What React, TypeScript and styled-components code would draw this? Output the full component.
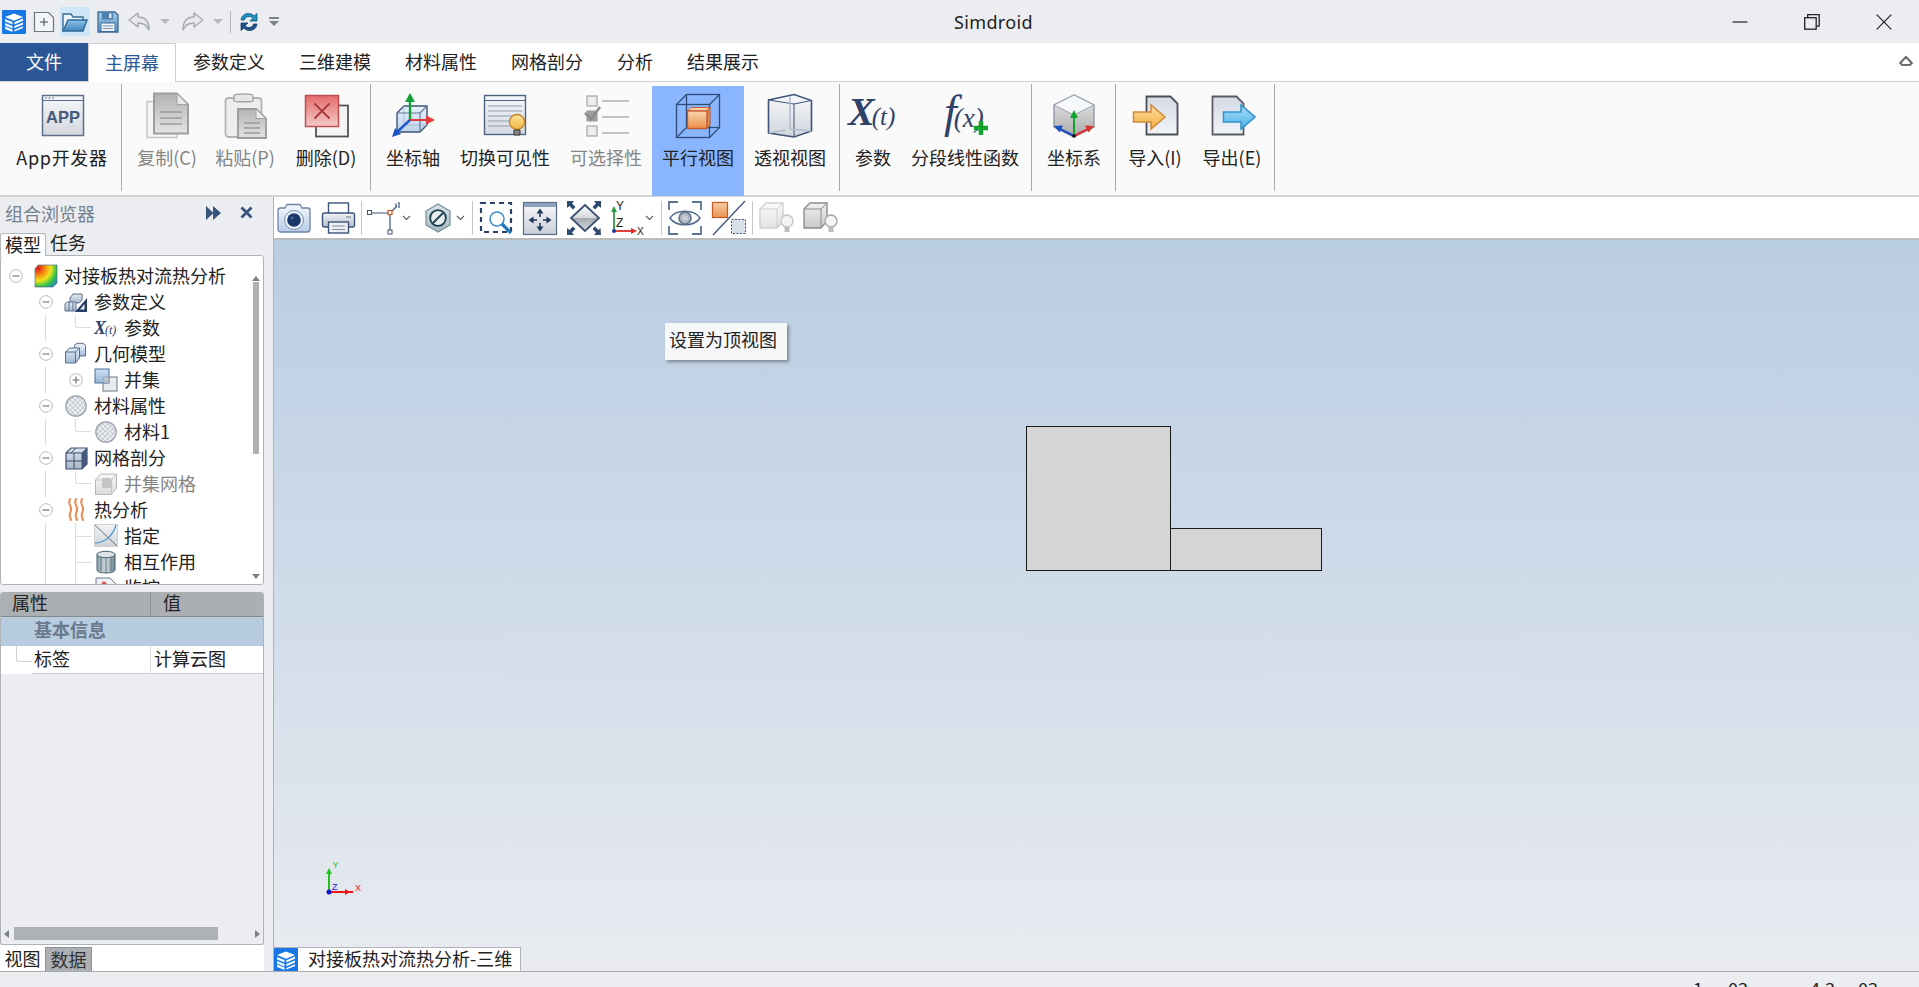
import React from "react";
import styled, { createGlobalStyle } from "styled-components";

const FONT = `"Noto Sans CJK SC", "Noto Sans", "Liberation Sans", sans-serif`;

const Global = createGlobalStyle`
  html, body { margin: 0; padding: 0; background: #ebedf0; overflow: hidden; }
  * { box-sizing: border-box; }
  svg { display: block; flex: none; }
`;

const Page = styled.div`
  width: 1919px; height: 987px; display: flex; flex-direction: column; overflow: hidden;
  font-family: ${FONT}; font-size: 18px; color: #222; background: #ebedf0;
`;

/* ---------- title bar ---------- */
const TitleBar = styled.header`
  height: 43px; flex: none; display: grid; grid-template-columns: 954px auto 1fr; align-items: center; background: #ebedf0;
`;
const Qat = styled.div`display: flex; align-items: center; height: 100%;`;
const QatItem = styled.div<{ $ml: number; $w: number; $on?: boolean }>`
  margin-left: ${(p) => p.$ml}px; width: ${(p) => p.$w}px; height: 29px; display: flex; align-items: center; justify-content: center;
  background: ${(p) => (p.$on ? "#cfe5f8" : "transparent")};
`;
const QatSep = styled.div`margin-left: 7px; width: 1px; height: 22px; background: #b4b8bc;`;
const Title = styled.div`font-family: "Noto Sans", sans-serif; font-size: 18px; color: #222; letter-spacing: 0.35px; line-height: 24px;`;
const WinControls = styled.div`display: flex; justify-content: flex-end; padding-right: 27px; gap: 56px;`;

/* ---------- tabs ---------- */
const TabBar = styled.nav`
  height: 39px; flex: none; display: flex; background: #fff; border-bottom: 1px solid #cfcfcf; position: relative;
`;
const FileTab = styled.div`
  width: 88px; height: 38px; background: #2b5797; color: #fff; display: flex; align-items: center; justify-content: center; padding-bottom: 2px;
`;
const RibbonTab = styled.div<{ $active?: boolean }>`
  padding: 0 ${(p) => (p.$active ? 16 : 17)}px 2px; height: ${(p) => (p.$active ? 39 : 38)}px; display: flex; align-items: center;
  color: ${(p) => (p.$active ? "#2b5797" : "#222")}; background: #fff;
  border: ${(p) => (p.$active ? "1px solid #cfcfcf" : "none")}; border-bottom: none;
  position: relative; z-index: 1;
`;
const Collapse = styled.div`margin-left: auto; padding: 12px 6px 0 0;`;

/* ---------- ribbon ---------- */
const Ribbon = styled.section`
  height: 115px; flex: none; display: flex; background: #fafafa; border-bottom: 2px solid #d4d4d4; padding-top: 4px;
`;
const RibbonGroup = styled.div<{ $pl?: number; $pr?: number }>`
  display: flex; padding-left: ${(p) => p.$pl ?? 0}px; padding-right: ${(p) => p.$pr ?? 0}px; position: relative;
  &::after { content: ""; position: absolute; right: 0; top: -2px; bottom: 4px; width: 1px; background: #a9a9a9; }
`;
const RibbonButton = styled.div<{ $w: number; $on?: boolean; $off?: boolean }>`
  width: ${(p) => p.$w}px; height: 110px; display: flex; flex-direction: column; align-items: center; padding-top: 6px;
  background: ${(p) => (p.$on ? "#8ab6ff" : "transparent")};
  color: ${(p) => (p.$off ? "#858585" : "#222")}; white-space: nowrap;
`;
const RibbonLabel = styled.div<{ $wide?: boolean }>`margin-top: 5px; line-height: 24px; height: 24px; letter-spacing: ${(p) => (p.$wide ? "0.7px" : "0")};`;

/* ---------- main ---------- */
const Main = styled.main`flex: 1; min-height: 0; display: flex;`;
const LeftColumn = styled.aside`width: 273px; flex: none; display: flex; flex-direction: column; padding-right: 9px;`;
const PanelHead = styled.div`
  height: 35px; flex: none; display: flex; align-items: center; padding: 0 11px 4px 5px; color: #75828f;
`;
const PanelTitle = styled.div`flex: 1; line-height: 24px;`;
const PanelTools = styled.div`display: flex; align-items: center; gap: 19px;`;
const SideTabs = styled.div`height: 23px; flex: none; display: flex; align-items: flex-end;`;
const SideTab = styled.div<{ $active?: boolean }>`
  height: 23px; width: ${(p) => (p.$active ? 46 : 44)}px; line-height: 21px; text-align: center; position: relative; top: ${(p) => (p.$active ? 1 : 0)}px; z-index: 1;
  background: ${(p) => (p.$active ? "#fff" : "transparent")};
  border: ${(p) => (p.$active ? "1px solid #b4b8bc" : "none")}; border-bottom: none; border-radius: 3px 3px 0 0;
`;
const TreeBox = styled.div`
  height: 330px; flex: none; background: #fff; border: 1px solid #b0b3b6; border-radius: 3px; display: flex; overflow: hidden;
`;
const TreeList = styled.ul`flex: 1; list-style: none; margin: 0; padding: 7px 0 0; overflow: hidden; min-width: 0;`;
const Row = styled.li<{ $level: number; $trunk?: boolean; $muted?: boolean }>`
  height: 26px; display: flex; align-items: center; position: relative; white-space: nowrap;
  padding-left: ${(p) => 5 + p.$level * 30}px; color: ${(p) => (p.$muted ? "#858585" : "#222")};
  &::before { content: ${(p) => (p.$trunk ? '""' : "none")}; position: absolute; left: 44px; top: 0; bottom: 0; width: 1px; background: #dcdcdc; }
`;
const Connector = styled.span<{ $run?: boolean }>`
  position: absolute; left: 74px; top: 0; width: 16px; height: ${(p) => (p.$run ? 26 : 13)}px;
  border-left: 1px solid #dcdcdc;
  ${(p) => (p.$run ? "" : "border-bottom: 1px solid #dcdcdc; border-bottom-left-radius: 3px;")}
  &::after { content: ${(p) => (p.$run ? '""' : "none")}; position: absolute; left: 0; top: 13px; width: 16px; height: 1px; background: #dcdcdc; }
`;
const ExpanderSlot = styled.span`width: 20px; flex: none; display: flex; justify-content: center;`;
const IconSlot = styled.span`margin-left: 8px; width: 24px; height: 24px; flex: none; position: relative; z-index: 1;`;
const RowLabel = styled.span`margin: -3px 0 0 6px; line-height: 24px;`;
const VScroll = styled.div`width: 12px; flex: none; display: flex; flex-direction: column; align-items: center; padding: 20px 0 5px; margin-right: 1px;`;
const VThumb = styled.div`width: 6px; height: 172px; background: #aeb2b5; margin-top: 1px;`;
const ArrowUp = styled.div`width: 0; height: 0; border: 4px solid transparent; border-top: none; border-bottom: 5px solid #7d8084;`;
const ArrowDown = styled.div`width: 0; height: 0; margin-top: auto; border: 4px solid transparent; border-bottom: none; border-top: 5px solid #7d8084;`;

const PropBox = styled.div`
  margin-top: 7px; flex: 1; min-height: 0; border: 1px solid #b0b3b6; border-top: none; border-radius: 3px; display: flex; flex-direction: column; background: #ebedf0;
`;
const PropHead = styled.div`
  height: 25px; flex: none; display: grid; grid-template-columns: 150px 1fr; background: #abafb2; border-bottom: 1px solid #85898d; border-radius: 3px 3px 0 0; line-height: 21px;
`;
const PropHeadCell = styled.div<{ $first?: boolean }>`
  padding-left: ${(p) => (p.$first ? 11 : 12)}px; ${(p) => (p.$first ? "border-right: 1px solid #8c9094;" : "")}
`;
const PropGroup = styled.div`
  height: 29px; flex: none; background: #b8cce0; padding-left: 33px; font-weight: 700; color: #6a7a8e; line-height: 25px;
`;
const PropRow = styled.div`
  height: 28px; flex: none; display: grid; grid-template-columns: 31px 119px 1fr; background: #fff; position: relative; line-height: 24px;
`;
const PropGuide = styled.span`
  position: absolute; left: 15px; top: 0; width: 16px; height: 16px; border-left: 1px solid #d2d2d2; border-bottom: 1px solid #d2d2d2; border-bottom-left-radius: 3px;
`;
const PropCell = styled.div<{ $divider?: boolean }>`
  border-bottom: 1px solid #cfd1d3; padding-left: ${(p) => (p.$divider ? 2 : 3)}px;
  ${(p) => (p.$divider ? "border-right: 1px solid #d8d8d8;" : "")}
`;
const HScroll = styled.div`
  margin-top: auto; margin-bottom: 4px; height: 13px; flex: none; display: flex; align-items: center; padding: 0 3px;
`;
const HThumb = styled.div`width: 204px; height: 13px; background: #aeb2b5; margin-left: 5px;`;
const ArrowLeft = styled.div`width: 0; height: 0; border: 4px solid transparent; border-left: none; border-right: 5px solid #7d8084;`;
const ArrowRight = styled.div`width: 0; height: 0; margin-left: auto; border: 4px solid transparent; border-right: none; border-left: 5px solid #7d8084;`;
const BottomTabs = styled.div`height: 26px; flex: none; background: #fff; display: flex; align-items: flex-end;`;
const BottomTab = styled.div<{ $active?: boolean }>`
  height: 24px; line-height: 22px; width: ${(p) => (p.$active ? 47 : 45)}px; text-align: center;
  ${(p) => (p.$active ? "background: #acb0b3; border: 1px solid #8d9195; border-bottom: none; color:#333;" : "")}
`;

const RightColumn = styled.div`flex: 1; min-width: 0; display: flex; flex-direction: column; border-left: 1px solid #b0b3b6;`;
const Toolbar = styled.div`height: 43px; flex: none; background: #fff; border-bottom: 2px solid #bcbcbc; display: flex; align-items: center; padding-left: 2px;`;
const ToolItem = styled.div<{ $ml?: number; $w?: number }>`
  margin-left: ${(p) => p.$ml ?? 0}px; width: ${(p) => p.$w ?? 36}px; height: 36px; display: flex; align-items: center; justify-content: center; flex: none;
`;
const ToolSep = styled.div<{ $ml: number }>`margin-left: ${(p) => p.$ml}px; width: 1px; height: 34px; background: #c4c6c9; flex: none;`;

const Viewport = styled.div`
  flex: 1; min-height: 0; position: relative; overflow: hidden;
  background: linear-gradient(180deg, #b9cde3 0%, #e9ebf0 100%);
`;
const Tooltip = styled.div`
  position: absolute; left: 391px; top: 83px; width: 122px; height: 37px; background: #f6f7f8; padding-left: 4px; line-height: 33px; white-space: nowrap;
  box-shadow: 2px 2px 3px rgba(0,0,0,.35);
`;
const ModelDrawing = styled.svg`position: absolute; left: 752px; top: 186px;`;
const Triad = styled.svg`position: absolute; left: 40px; top: 620px;`;
const ViewTab = styled.div`
  position: absolute; left: 0; bottom: 0; width: 247px; height: 24px; background: #fff; border: 1px solid #b0b3b6; border-left: none; border-bottom: none;
  display: flex; align-items: center; white-space: nowrap;
`;
const ViewTabText = styled.span`margin: -3px 0 0 10px; line-height: 24px;`;
const StatusBar = styled.footer`
  height: 16px; flex: none; border-top: 1px solid #a9acaf; background: #ebedf0; overflow: hidden; display: flex; justify-content: flex-end; padding: 4px 41px 0 0; line-height: 24px; color: #222;
`;
const StatusValue = styled.span<{ $ml: number }>`margin-left: ${(p) => p.$ml}px;`;

/* ---------- svg helpers ---------- */
const V = ({ id, a, b }: { id: string; a: string; b: string }) => (
  <linearGradient id={id} x1="0" y1="0" x2="0" y2="1"><stop offset="0" stopColor={a} /><stop offset="1" stopColor={b} /></linearGradient>
);
const Logo = ({ s = 24 }: { s?: number }) => (
  <svg width={s} height={s} viewBox="0 0 24 24">
    <rect width="24" height="24" rx="1" fill="#1877e6" />
    <path d="M12 3.500l9 3.600-9 3.700-9-3.700z" fill="#fff" />
    <path d="M3 9l7.500 3v2.400L3 11.400zM3 13l7.500 3v2.400L3 15.400zM3 16.600l7.500 3V22L3 19z" fill="#fff" opacity=".95" />
    <path d="M21 8.600l-8.600 3.600v2.200L21 10.800zM21 12.400l-8.600 3.600v2.200L21 14.600zM21 16.200L12.400 20v1.600L21 18z" fill="#fff" />
  </svg>
);
const NewIcon = () => (
  <svg width="22" height="22" viewBox="0 0 22 22"><path d="M1.500 1.500h14l5 5v14h-19z" fill="#f4f5f7" stroke="#6c7683" strokeWidth="1.200" /><path d="M11 7v8M7 11h8" stroke="#3e4650" strokeWidth="1" /></svg>
);
const OpenIcon = () => (
  <svg width="26" height="24" viewBox="0 0 26 24"><defs><V id="op" a="#8fc1e8" b="#3f86bd" /></defs><path d="M1 21V4h8l2 3h10v3" fill="#e9f2f9" stroke="#3a6d94" strokeWidth="1.400" /><path d="M1 21l5-11h19l-4 11z" fill="url(#op)" stroke="#2d6a98" strokeWidth="1.400" /></svg>
);
const SaveIcon = () => (
  <svg width="22" height="22" viewBox="0 0 22 22"><defs><V id="sv" a="#9fc4e6" b="#5c93c6" /></defs><path d="M1 1h17l3 3v17H1z" fill="url(#sv)" stroke="#3d6d9a" strokeWidth="1.300" /><rect x="5" y="1.500" width="11" height="7" fill="#4f82b0" /><rect x="12" y="2.500" width="2.500" height="4.500" fill="#dbe8f3" /><rect x="4" y="12" width="14" height="8.500" fill="#eef3f8" stroke="#3d6d9a" /><path d="M6 15h10M6 17.500h10" stroke="#7f97ad" /></svg>
);
const UndoIcon = ({ flip = false }: { flip?: boolean }) => (
  <svg width="23" height="20" viewBox="0 0 23 20" style={flip ? { transform: "scaleX(-1)" } : undefined}><path d="M1 8L10 1v4c7 0 11 4 11 13-2-5-5-7-11-7v4z" fill="#e8e9eb" stroke="#a6a9ad" strokeWidth="1.400" strokeLinejoin="round" /></svg>
);
const SmallDrop = ({ dash = false }: { dash?: boolean }) => (
  <svg width="10" height="10" viewBox="0 0 10 10">{dash && <rect y="0" width="10" height="2" fill="#7f8388" />}<path d={dash ? "M0 4h10L5 9z" : "M0 2h10L5 7z"} fill={dash ? "#7f8388" : "#b3b6ba"} /></svg>
);
const RefreshIcon = () => (
  <svg width="20" height="24" viewBox="0 0 20 24"><path d="M2 10c.5-4 3.500-6.500 7.500-6.500 2.500 0 4.500 1 5.500 2.500L18 3.500V11h-7l3-2.700C13 7 11.500 6.500 10 6.500 7.500 6.500 6 8 5.500 10z" fill="#1f8fc4" stroke="#12567f" strokeWidth=".8" /><path d="M18 14c-.5 4-3.500 6.500-7.500 6.500-2.500 0-4.500-1-5.500-2.500L2 20.500V13h7l-3 2.700C7 17 8.500 17.500 10 17.500c2.500 0 4-1.500 4.500-3.500z" fill="#1d4f86" stroke="#12406f" strokeWidth=".8" /></svg>
);
const WinMin = () => <svg width="16" height="16" viewBox="0 0 16 16"><path d="M0.500 8h15" stroke="#222" strokeWidth="1.200" /></svg>;
const WinMax = () => <svg width="16" height="16" viewBox="0 0 16 16"><rect x=".7" y="3.700" width="11.500" height="11.500" fill="none" stroke="#222" strokeWidth="1.300" /><path d="M3.700 3.500V.7h11.500v11.500h-2.800" fill="none" stroke="#222" strokeWidth="1.300" /></svg>;
const WinClose = () => <svg width="16" height="16" viewBox="0 0 16 16"><path d="M.7.7l14.600 14.600M15.300.7L.7 15.300" stroke="#222" strokeWidth="1.200" /></svg>;
const CollapseIcon = () => <svg width="14" height="12" viewBox="0 0 14 12"><path d="M1.200 8L7 2l5.800 6-2 2H3.200z" fill="#fff" stroke="#6e6e6e" strokeWidth="2.200" strokeLinejoin="round" /></svg>;

/* ribbon icons 48 x 48 */
const IcApp = () => (
  <svg width="48" height="48" viewBox="0 0 48 48"><defs><V id="app" a="#f6f7f9" b="#d3d7de" /></defs><rect x="4.500" y="3.500" width="41" height="40" fill="url(#app)" stroke="#5d6f8c" strokeWidth="1.500" /><path d="M4.500 8.500h41" stroke="#5d6f8c" /><path d="M7 6h2M10.500 6h2M14 6h2" stroke="#5d6f8c" /><text x="25" y="31" textAnchor="middle" fontFamily="Liberation Sans" fontWeight="700" fontSize="16.500" fill="#465a7c">APP</text></svg>
);
const IcCopy = () => (
  <svg width="48" height="48" viewBox="0 0 48 48"><defs><V id="cp" a="#b2b2b2" b="#e4e4e4" /></defs><path d="M4 9.500h30v36H4z" fill="#f5f5f5" stroke="#c6c6c6" strokeWidth="1.500" /><path d="M11 1.500h23l11 11v29H11z" fill="url(#cp)" stroke="#9e9e9e" strokeWidth="2" /><path d="M34 1.500v11h11z" fill="#e8e8e8" stroke="#a2a2a2" /><path d="M17 20h22M17 26h22M17 32h22" stroke="#9c9c9c" strokeWidth="1.600" /></svg>
);
const IcPaste = () => (
  <svg width="48" height="48" viewBox="0 0 48 48"><defs><V id="pt" a="#b4b4b4" b="#e2e2e2" /></defs><rect x="4.500" y="6" width="36" height="39" rx="3" fill="#ededed" stroke="#b3b3b3" strokeWidth="1.800" /><path d="M13 3.500c0-2 19-2 19 0V9c0 1-19 1-19 0z" fill="#e6e6e6" stroke="#a6a6a6" strokeWidth="1.500" /><path d="M17 17h18l10 9.500V46H17z" fill="url(#pt)" stroke="#9b9b9b" strokeWidth="1.800" /><path d="M35 17v9.500h10z" fill="#ececec" stroke="#a0a0a0" /><path d="M23 31h16M23 36h16M23 41h16" stroke="#9a9a9a" strokeWidth="1.500" /></svg>
);
const IcDelete = () => (
  <svg width="48" height="48" viewBox="0 0 48 48"><defs><V id="dl" a="#e76a6a" b="#f2cbcb" /></defs><rect x="14" y="13.500" width="32" height="31" fill="#f4f4f4" stroke="#555" strokeWidth="1.800" /><rect x="3.500" y="3.500" width="33" height="31" fill="url(#dl)" stroke="#c05050" strokeWidth="1.500" /><path d="M12.500 11.500l15 15M27.500 11.500l-15 15" stroke="#a83a3a" strokeWidth="1.800" /></svg>
);
const IcAxis = () => (
  <svg width="48" height="48" viewBox="0 0 48 48"><defs><V id="ax" a="#e9f1fb" b="#bcd2ea" /></defs><path d="M8 21l7-7h23v19l-7 7H8z" fill="url(#ax)" stroke="#3d5477" strokeWidth="1.400" /><path d="M15 14v19h23M15 33l-7 7" fill="none" stroke="#a9bdd4" strokeWidth="1" /><path d="M8 21h23v19M31 21l7-7" fill="none" stroke="#5d7598" strokeWidth="1.100" /><path d="M21 28V9" stroke="#13a03b" strokeWidth="2.400" /><path d="M21 1l-5 9h10z" fill="#13a03b" /><path d="M21 28h17" stroke="#e23b3b" strokeWidth="2" /><path d="M46 28l-9-4.500v9z" fill="#e23b3b" /><path d="M21 28L8 40" stroke="#1d56c8" strokeWidth="2.400" /><path d="M3 45l3-9 6 6z" fill="#1d56c8" /></svg>
);
const IcVisible = () => (
  <svg width="48" height="48" viewBox="0 0 48 48"><defs><V id="vi" a="#f4f5f8" b="#d6dae2" /><V id="bu" a="#fbe6a2" b="#f0b23a" /></defs><rect x="3.500" y="3.500" width="41" height="39" fill="url(#vi)" stroke="#4f6385" strokeWidth="1.400" /><path d="M3.500 8.500h41" stroke="#4f6385" /><path d="M7 14h34M7 19h34M7 24h25M7 29h22M7 34h22" stroke="#8d9bb2" /><circle cx="36" cy="30" r="7.500" fill="url(#bu)" stroke="#c4842a" strokeWidth="1.300" /><path d="M33 38h6v5h-6z" fill="#888" stroke="#333" /></svg>
);
const IcSelect = () => (
  <svg width="48" height="48" viewBox="0 0 48 48"><g fill="none" stroke="#b5b5b5" strokeWidth="1.500"><rect x="5" y="4" width="10" height="10" fill="#eee" /><rect x="5" y="34" width="10" height="10" fill="#eee" /></g><rect x="5" y="19" width="10" height="10" fill="#9f9f9f" stroke="#9a9a9a" /><path d="M3 21l6 6L18 15" fill="none" stroke="#8c8c8c" strokeWidth="2.500" /><path d="M20 9h27M20 25h27M20 41h27" stroke="#b0b0b0" strokeWidth="1.600" /></svg>
);
const IcParallel = () => (
  <svg width="48" height="48" viewBox="0 0 48 48"><defs><V id="pa" a="#fbd7b0" b="#ea8d47" /></defs><g fill="none" stroke="#2f4c76" strokeWidth="1.300"><rect x="12.500" y="2.500" width="33" height="33" /><rect x="2.500" y="12.500" width="33" height="33" /><path d="M2.500 12.500l10-10M35.500 12.500l10-10M2.500 45.500l10-10M35.500 45.500l10-10" /></g><path d="M17 15.500h19L33 19H13.500z" fill="#f9d3ac" stroke="#c5562a" /><path d="M36 15.500V33l-3 3.500V19z" fill="#e3925a" stroke="#c5562a" /><rect x="13.500" y="19" width="19.500" height="17.500" fill="url(#pa)" stroke="#c5562a" strokeWidth="1.300" /></svg>
);
const IcPersp = () => (
  <svg width="48" height="48" viewBox="0 0 48 48"><defs><V id="pe" a="#f8f9fb" b="#cfd4dc" /></defs><path d="M2.500 8L28 2.500l17.500 6V39L28 45 2.500 41z" fill="url(#pe)" stroke="#3f5478" strokeWidth="1.600" /><path d="M2.500 8L28 12l17.500-3.500M28 12v33" fill="none" stroke="#3f5478" strokeWidth="1" /><path d="M24 4v33M20 38l-17 3M24 37l21 2" stroke="#b4bfce" strokeWidth="1.600" fill="none" /></svg>
);
const IcXt = () => (
  <svg width="60" height="48" viewBox="0 0 60 48"><text x="5" y="33" fontFamily="Liberation Serif" fontStyle="italic" fontWeight="700" fontSize="40" fill="#2f4268">X<tspan fontSize="25" fontWeight="400" dx="-3">(t)</tspan></text></svg>
);
const IcFx = () => (
  <svg width="60" height="48" viewBox="0 0 60 48"><text x="9" y="35" fontFamily="Liberation Serif" fontStyle="italic" fontSize="46" fill="#2f4268">f<tspan fontSize="27" dx="-3">(x)</tspan></text><path d="M46 29v14M39 36h14" stroke="#12a32e" strokeWidth="4.500" /></svg>
);
const IcCoord = () => (
  <svg width="48" height="48" viewBox="0 0 48 48"><defs><V id="co" a="#ececec" b="#a9a9a9" /></defs><path d="M24 3l20 10v22l-20 10L4 35V13z" fill="url(#co)" stroke="#8e98a4" strokeWidth="1.400" /><path d="M24 3l20 10-20 10L4 13z" fill="#f7f8f9" stroke="#9aa5b2" /><path d="M24 44V24" stroke="#11a32a" strokeWidth="2" /><path d="M24 18l-4 8h8z" fill="#11a32a" /><path d="M24 44L10 37" stroke="#1d4fc4" strokeWidth="2.200" /><path d="M4 34l9-.5-3.500 7z" fill="#1d4fc4" /><path d="M24 44l14-7" stroke="#d93636" strokeWidth="2.200" /><path d="M44 34l-9-.5 3.500 7z" fill="#d93636" /><circle cx="24" cy="44" r="1.800" fill="#111" /></svg>
);
const IcImport = () => (
  <svg width="48" height="48" viewBox="0 0 48 48"><defs><V id="im" a="#d4dbe6" b="#f1f3f6" /><V id="ia" a="#fde3a0" b="#f3ac42" /></defs><path d="M15.500 4.500h24l7 7v31h-31z" fill="url(#im)" stroke="#4b4f55" strokeWidth="1.800" /><path d="M2.500 20H20v-7l14 12-14 12v-7H2.500z" fill="url(#ia)" stroke="#d08a3a" strokeWidth="1.500" /></svg>
);
const IcExport = () => (
  <svg width="48" height="48" viewBox="0 0 48 48"><defs><V id="ex" a="#d4dbe6" b="#f1f3f6" /><V id="ea" a="#a8dcf7" b="#4eb3e8" /></defs><path d="M4.500 4.500h24l7 7v31h-31z" fill="url(#ex)" stroke="#5a5e64" strokeWidth="1.800" /><path d="M15.500 20H33v-7l14 12-14 12v-7H15.500z" fill="url(#ea)" stroke="#2f93cf" strokeWidth="1.500" /></svg>
);

/* panel header */
const FastForward = () => <svg width="15" height="14" viewBox="0 0 15 14"><path d="M0 0l7.500 7L0 14zM7 0l8 7-8 7z" fill="#38547a" /></svg>;
const PanelClose = () => <svg width="13" height="13" viewBox="0 0 13 13"><path d="M1.500 1.500l10 10M11.500 1.500l-10 10" stroke="#38547a" strokeWidth="2.800" /></svg>;
const Expander = ({ plus = false }: { plus?: boolean }) => (
  <svg width="14" height="14" viewBox="0 0 14 14"><circle cx="7" cy="7" r="6.300" fill="#fff" stroke="#b9b9b9" /><path d={plus ? "M3.500 7h7M7 3.500v7" : "M3.500 7h7"} stroke="#666" strokeWidth="1.100" /></svg>
);

/* tree icons 24 x 24 */
const TiStudy = () => (
  <svg width="24" height="24" viewBox="0 0 24 24"><defs><radialGradient id="hm" cx=".15" cy=".15" r="1.150"><stop offset="0" stopColor="#e01818" /><stop offset=".3" stopColor="#f59a12" /><stop offset=".5" stopColor="#e9e41c" /><stop offset=".72" stopColor="#36c24a" /><stop offset="1" stopColor="#1f7fe0" /></radialGradient></defs><path d="M4 1h19v18l-4 4H1V5z" fill="url(#hm)" stroke="#3f5c80" strokeWidth=".6" /></svg>
);
const TiParam = () => (
  <svg width="24" height="24" viewBox="0 0 24 24"><defs><V id="tp" a="#e4ebf4" b="#a9bad0" /></defs><path d="M6 8l3-4h9v6l-3 3H6z" fill="url(#tp)" stroke="#5a6f8c" /><path d="M1 14l2-2h9v9H1z" fill="url(#tp)" stroke="#5a6f8c" /><path d="M5 12v9M9 12v9" stroke="#5a6f8c" /><path d="M23 8v14H11z" fill="#253c66" /><path d="M20.500 14v5.500H16z" fill="#e9eef4" /></svg>
);
const TiXt = () => (
  <svg width="24" height="24" viewBox="0 0 24 24"><text x="0" y="18" fontFamily="Liberation Serif" fontStyle="italic" fontWeight="700" fontSize="18" fill="#2f4268">X<tspan fontSize="12" fontWeight="400" dx="-1">(t)</tspan></text></svg>
);
const TiGeo = () => (
  <svg width="24" height="24" viewBox="0 0 24 24"><defs><V id="tg" a="#e6eef7" b="#9fb8d4" /></defs><ellipse cx="16" cy="3.500" rx="5.500" ry="2.300" fill="#e3e9f1" stroke="#5a6f8c" /><path d="M10.500 3.500V14h11V3.500" fill="url(#tg)" stroke="#5a6f8c" /><path d="M1.500 10l4-4h10v10l-4 5h-10z" fill="url(#tg)" stroke="#5a6f8c" /><path d="M1.500 10h10v11M11.500 10l4-4" fill="none" stroke="#5a6f8c" /></svg>
);
const TiUnion = () => (
  <svg width="24" height="24" viewBox="0 0 24 24"><defs><V id="tu" a="#cfe0f3" b="#96b6dc" /></defs><rect x="9" y="9" width="14" height="14" fill="#e9ebee" stroke="#6d7785" /><rect x="1" y="1" width="14" height="14" fill="url(#tu)" stroke="#4f6f9c" /><path d="M9 9h6v6H9z" fill="#bcc4ce" stroke="#8c96a3" strokeDasharray="2 1" /></svg>
);
const TiMaterial = ({ id = "chk" }: { id?: string }) => (
  <svg width="24" height="24" viewBox="0 0 24 24"><defs><pattern id={id} width="5" height="5" patternUnits="userSpaceOnUse"><rect width="5" height="5" fill="#eceef1" /><rect width="2.500" height="2.500" fill="#c9cdd3" /><rect x="2.500" y="2.500" width="2.500" height="2.500" fill="#c9cdd3" /></pattern></defs><circle cx="12" cy="12" r="10.200" fill={`url(#${id})`} stroke="#9aa1ad" strokeWidth="1.200" /></svg>
);
const TiMesh = () => (
  <svg width="24" height="24" viewBox="0 0 24 24"><defs><V id="tm" a="#dbe3ee" b="#aab6c8" /></defs><path d="M2 7l5-5h16v16l-5 5H2z" fill="url(#tm)" stroke="#3d4f6f" strokeWidth="1.200" /><path d="M2 7h16v16M18 7l5-5M10 7v16M2 15h16M7 7l5-5" fill="none" stroke="#3d4f6f" /><path d="M18 7l5-5v16l-5 5z" fill="#44597b" /></svg>
);
const TiMeshGray = () => (
  <svg width="24" height="24" viewBox="0 0 24 24"><defs><V id="tn" a="#f5f5f5" b="#dcdcdc" /></defs><path d="M1.500 8l5-6h16v14l-5 6.500h-16z" fill="url(#tn)" stroke="#b6b6b6" /><path d="M1.500 8h16v14.500M17.500 8l5-6" fill="none" stroke="#c4c4c4" /><rect x="8" y="6" width="9" height="10" fill="#c4c4c4" /></svg>
);
const TiHeat = () => (
  <svg width="24" height="24" viewBox="0 0 24 24"><g fill="none" stroke="#ec8a4e" strokeWidth="2" strokeLinecap="round"><path d="M6 1c-3 5 3 8 .5 13-1 2-1 5 .5 8" /><path d="M12 1c-3 5 3 8 .5 13-1 2-1 5 .5 8" /><path d="M18 1c-3 5 3 8 .5 13-1 2-1 5 .5 8" /></g></svg>
);
const TiAssign = () => (
  <svg width="24" height="24" viewBox="0 0 24 24"><defs><V id="ta" a="#f2f2f2" b="#cfd4da" /></defs><rect x=".5" y=".5" width="23" height="22" fill="url(#ta)" stroke="#d0d0d0" /><path d="M1 1l22 21" stroke="#67707c" /><path d="M1 19C10 19 19 12 22 1" fill="none" stroke="#3f95d4" strokeWidth="1.200" /></svg>
);
const TiInteract = () => (
  <svg width="24" height="24" viewBox="0 0 24 24"><defs><linearGradient id="ti" x1="0" y1="0" x2="1" y2="0"><stop offset="0" stopColor="#8aa0a8" /><stop offset=".5" stopColor="#d2dcdf" /><stop offset="1" stopColor="#6c8590" /></linearGradient></defs><path d="M3 4v16c0 4 18 4 18 0V4z" fill="url(#ti)" stroke="#4a6270" /><ellipse cx="12" cy="4.500" rx="9" ry="3.200" fill="#dce3e6" stroke="#4a6270" /><path d="M7 7v14M12 8v15M17 7v14" stroke="#5c7582" /></svg>
);
const TiMonitor = () => (
  <svg width="24" height="24" viewBox="0 0 24 24"><path d="M2 2h14l6 6v15H2z" fill="#eef1f5" stroke="#6a7a90" /><circle cx="10" cy="8" r="2.500" fill="#d9534f" /></svg>
);

/* toolbar icons 36 x 36 */
const TbCamera = () => (
  <svg width="36" height="36" viewBox="0 0 36 36"><defs><V id="ca" a="#f6f9fc" b="#b8cde6" /></defs><path d="M2 10.500Q2 8 4.500 8H9l2-3.500h13L26 8h5.500Q34 8 34 10.500V29q0 3-3 3H5q-3 0-3-3z" fill="url(#ca)" stroke="#6a84a8" strokeWidth="1.300" /><circle cx="18" cy="20" r="9.500" fill="#eaf0f7" stroke="#7e93b1" /><circle cx="18" cy="20" r="6.800" fill="#1c3869" /><circle cx="16" cy="18" r="1.500" fill="#506d9c" /></svg>
);
const TbPrint = () => (
  <svg width="36" height="36" viewBox="0 0 36 36"><defs><V id="pr" a="#f1f3f6" b="#b6c0ce" /></defs><rect x="8.500" y="3" width="20" height="12" fill="#fff" stroke="#3d5378" strokeWidth="1.400" /><rect x="2.500" y="13" width="32" height="14" rx="2" fill="url(#pr)" stroke="#3d5378" strokeWidth="1.400" /><path d="M26 17h5" stroke="#6d7c92" /><rect x="8.500" y="22" width="20" height="11" fill="#eef0f3" stroke="#3d5378" strokeWidth="1.400" /><path d="M12 26h13M12 29.500h13" stroke="#7f8ca0" strokeWidth="1.200" /></svg>
);
const TbLine = () => (
  <svg width="36" height="36" viewBox="0 0 36 36"><path d="M5 13h18M24 15v15M26 11l5-5" stroke="#3d5378" strokeWidth="1.200" fill="none" /><rect x="1.500" y="10.500" width="4" height="4" fill="#fff" stroke="#3d5378" /><rect x="22" y="10.500" width="4" height="4" fill="#fff" stroke="#c2541e" strokeWidth="1.200" /><rect x="22" y="30" width="4" height="4" fill="#fff" stroke="#3d5378" /><path d="M30 3.500v3M33 2v6" stroke="#3d5378" strokeWidth="1.200" /></svg>
);
const Chev = () => <svg width="9" height="6" viewBox="0 0 9 6"><path d="M1 1l3.500 3.500L8 1" fill="none" stroke="#606468" strokeWidth="1.200" /></svg>;
const TbHex = () => (
  <svg width="36" height="36" viewBox="0 0 36 36"><defs><V id="hx" a="#dbe3e7" b="#a6b8bf" /></defs><path d="M18 4l12 7v14l-12 7-12-7V11z" fill="url(#hx)" stroke="#6f9099" strokeWidth="1.200" /><circle cx="18" cy="18" r="7.800" fill="#e8edf0" stroke="#173f4e" strokeWidth="1.800" /><path d="M13 23l10-10" stroke="#173f4e" strokeWidth="1.800" /></svg>
);
const TbZoom = () => (
  <svg width="36" height="36" viewBox="0 0 36 36"><rect x="3" y="3" width="30" height="29" fill="none" stroke="#2a4268" strokeWidth="2.200" strokeDasharray="5 4" /><circle cx="19" cy="19" r="7" fill="#fff" stroke="#3b8ec9" strokeWidth="1.500" /><path d="M24 24l9 9" stroke="#2478ba" strokeWidth="3.200" /></svg>
);
const TbMove = () => (
  <svg width="36" height="36" viewBox="0 0 36 36"><defs><V id="mv" a="#f9fafb" b="#c9cfd8" /></defs><rect x="1.500" y="2.500" width="33" height="32" fill="url(#mv)" stroke="#576b8c" strokeWidth="1.200" /><rect x="2" y="3" width="32" height="4" fill="#8da2bc" /><g fill="#233a5f"><path d="M18 8.500l-3.500 5h7z" /><path d="M18 31.500l-3.500-5h7z" /><path d="M6.500 20l5-3.500v7z" /><path d="M29.500 20l-5-3.500v7z" /><path d="M17 13h2v14h-2z" opacity=".0" /></g><path d="M18 13v4M18 23v4M11 20h4M21 20h4" stroke="#233a5f" strokeWidth="1.600" /></svg>
);
const TbFit = () => (
  <svg width="36" height="36" viewBox="0 0 36 36"><defs><V id="df" a="#fbfbfc" b="#d6d8dc" /><V id="dg" a="#a5a9b0" b="#d7d9dd" /></defs><path d="M19 5l14 13H5z" fill="url(#df)" /><path d="M5 18h28L19 31z" fill="url(#dg)" /><path d="M19 5l14 13-14 13L5 18z" fill="none" stroke="#3a5072" strokeWidth="1.800" /><g fill="#2f4a72"><path d="M1 1h7L6 3.500 9.500 7 7 9.500 3.500 6 1 8z" /><path d="M35 1h-7l2 2.500L26.500 7 29 9.500 32.500 6 35 8z" /><path d="M1 35h7l-2-2.500L9.500 29 7 26.500 3.500 30 1 28z" /><path d="M35 35h-7l2-2.500-3.500-3.500 2.500-2.500 3.500 3.500 2-2z" /></g></svg>
);
const TbAxes = () => (
  <svg width="36" height="36" viewBox="0 0 36 36" fontFamily="Liberation Sans" fontSize="12"><path d="M5 31V10" stroke="#2a9a45" strokeWidth="1.800" /><path d="M5 6l-3 6h6z" fill="#2a9a45" /><path d="M5 31h19" stroke="#e02b2b" strokeWidth="1.800" /><path d="M28 31l-6-3v6z" fill="#e02b2b" /><circle cx="5" cy="31" r="2" fill="#1b3e9b" /><text x="7" y="10" fill="#222">Y</text><text x="7" y="27" fill="#222">Z</text><text x="28" y="35" fontSize="10" fill="#222">X</text></svg>
);
const TbEye = () => (
  <svg width="36" height="36" viewBox="0 0 36 36"><path d="M2 10V2h9M25 2h9v8M2 26v8h9M25 34h9v-8" fill="none" stroke="#5c7394" strokeWidth="1.800" /><path d="M3 18C9 9 27 9 33 18 27 27 9 27 3 18z" fill="#fff" stroke="#516a8e" strokeWidth="1.500" /><circle cx="18" cy="18" r="6" fill="#aeb5bd" stroke="#5a6e88" strokeWidth="1.500" /><circle cx="18" cy="18" r="3" fill="#c9ced4" /></svg>
);
const TbSection = () => (
  <svg width="36" height="36" viewBox="0 0 36 36"><defs><V id="sc" a="#f9cfa4" b="#ea914f" /></defs><rect x="1.500" y="2.500" width="15" height="15" fill="url(#sc)" stroke="#c55c2a" strokeWidth="1.300" /><rect x="20.500" y="19.500" width="14" height="14" fill="#d9e0ea" stroke="#3e5477" strokeDasharray="2 1.500" /><path d="M34 1L2 35" stroke="#3e5477" strokeWidth="1.300" /></svg>
);
const TbLight = ({ dark = false }: { dark?: boolean }) => {
  const id = dark ? "lc1" : "lc2";
  const st = dark ? "#8d8d8d" : "#cfcfcf";
  return (
    <svg width="36" height="36" viewBox="0 0 36 36"><defs><V id={id} a={dark ? "#f1f1f1" : "#fafafa"} b={dark ? "#c9c9c9" : "#e2e2e2"} /></defs><path d="M2 9l6-6h17v18l-6 7H2z" fill={`url(#${id})`} stroke={st} strokeWidth="1.400" /><path d="M2 9h17v19M19 9l6-6" fill="none" stroke={st} /><circle cx="29" cy="21" r="6" fill="#f4f4f4" stroke={dark ? "#a6a6a6" : "#c6c6c6"} strokeWidth="1.400" /><path d="M26.500 27h5v5h-5z" fill="#bdbdbd" /></svg>
  );
};

/* ---------- data ---------- */
const tabs = ["参数定义", "三维建模", "材料属性", "网格剖分", "分析", "结果展示"];

type Btn = { w: number; label: string; icon: React.ReactNode; on?: boolean; off?: boolean; wide?: boolean };
type Grp = { pl?: number; pr?: number; items: Btn[] };
const groups: Grp[] = [
  { pl: 2, items: [{ w: 120, label: "App开发器", icon: <IcApp />, wide: true }] },
  { pl: 6, pr: 3, items: [
    { w: 78, label: "复制(C)", icon: <IcCopy />, off: true },
    { w: 78, label: "粘贴(P)", icon: <IcPaste />, off: true },
    { w: 84, label: "删除(D)", icon: <IcDelete /> },
  ] },
  { pl: 5, pr: 4, items: [
    { w: 74, label: "坐标轴", icon: <IcAxis /> },
    { w: 110, label: "切换可见性", icon: <IcVisible /> },
    { w: 92, label: "可选择性", icon: <IcSelect />, off: true },
    { w: 92, label: "平行视图", icon: <IcParallel />, on: true },
    { w: 92, label: "透视视图", icon: <IcPersp /> },
  ] },
  { pr: 8, items: [
    { w: 66, label: "参数", icon: <IcXt /> },
    { w: 118, label: "分段线性函数", icon: <IcFx /> },
  ] },
  { items: [{ w: 84, label: "坐标系", icon: <IcCoord /> }] },
  { pr: 5, items: [
    { w: 78, label: "导入(I)", icon: <IcImport /> },
    { w: 76, label: "导出(E)", icon: <IcExport /> },
  ] },
];

type Node = { level: number; label: string; icon: React.ReactNode; exp?: "minus" | "plus"; trunk?: boolean; conn?: "end" | "run"; muted?: boolean };
const tree: Node[] = [
  { level: 0, label: "对接板热对流热分析", icon: <TiStudy />, exp: "minus" },
  { level: 1, label: "参数定义", icon: <TiParam />, exp: "minus" },
  { level: 2, label: "参数", icon: <TiXt />, trunk: true, conn: "end" },
  { level: 1, label: "几何模型", icon: <TiGeo />, exp: "minus" },
  { level: 2, label: "并集", icon: <TiUnion />, exp: "plus", trunk: true },
  { level: 1, label: "材料属性", icon: <TiMaterial id="chk1" />, exp: "minus" },
  { level: 2, label: "材料1", icon: <TiMaterial id="chk2" />, trunk: true, conn: "end" },
  { level: 1, label: "网格剖分", icon: <TiMesh />, exp: "minus" },
  { level: 2, label: "并集网格", icon: <TiMeshGray />, trunk: true, conn: "end", muted: true },
  { level: 1, label: "热分析", icon: <TiHeat />, exp: "minus" },
  { level: 2, label: "指定", icon: <TiAssign />, trunk: true, conn: "run" },
  { level: 2, label: "相互作用", icon: <TiInteract />, trunk: true, conn: "run" },
  { level: 2, label: "监控", icon: <TiMonitor />, trunk: true, conn: "run" },
];

export default function App() {
  return (
    <Page>
      <Global />
      <TitleBar>
        <Qat>
          <QatItem $ml={2} $w={24}><Logo /></QatItem>
          <QatItem $ml={7} $w={22}><NewIcon /></QatItem>
          <QatItem $ml={5} $w={30} $on><OpenIcon /></QatItem>
          <QatItem $ml={7} $w={22}><SaveIcon /></QatItem>
          <QatItem $ml={9} $w={23}><UndoIcon /></QatItem>
          <QatItem $ml={9} $w={10}><SmallDrop /></QatItem>
          <QatItem $ml={11} $w={23}><UndoIcon flip /></QatItem>
          <QatItem $ml={9} $w={10}><SmallDrop /></QatItem>
          <QatSep />
          <QatItem $ml={8} $w={20}><RefreshIcon /></QatItem>
          <QatItem $ml={10} $w={10}><SmallDrop dash /></QatItem>
        </Qat>
        <Title>Simdroid</Title>
        <WinControls><WinMin /><WinMax /><WinClose /></WinControls>
      </TitleBar>

      <TabBar>
        <FileTab>文件</FileTab>
        <RibbonTab $active>主屏幕</RibbonTab>
        {tabs.map((t) => <RibbonTab key={t}>{t}</RibbonTab>)}
        <Collapse><CollapseIcon /></Collapse>
      </TabBar>

      <Ribbon>
        {groups.map((g, i) => (
          <RibbonGroup key={i} $pl={g.pl} $pr={g.pr}>
            {g.items.map((b) => (
              <RibbonButton key={b.label} $w={b.w} $on={b.on} $off={b.off}>
                {b.icon}
                <RibbonLabel $wide={b.wide}>{b.label}</RibbonLabel>
              </RibbonButton>
            ))}
          </RibbonGroup>
        ))}
      </Ribbon>

      <Main>
        <LeftColumn>
          <PanelHead>
            <PanelTitle>组合浏览器</PanelTitle>
            <PanelTools><FastForward /><PanelClose /></PanelTools>
          </PanelHead>
          <SideTabs>
            <SideTab $active>模型</SideTab>
            <SideTab>任务</SideTab>
          </SideTabs>
          <TreeBox>
            <TreeList>
              {tree.map((n) => (
                <Row key={n.label + n.level} $level={n.level} $trunk={n.trunk} $muted={n.muted}>
                  {n.conn && <Connector $run={n.conn === "run"} />}
                  <ExpanderSlot>{n.exp && <Expander plus={n.exp === "plus"} />}</ExpanderSlot>
                  <IconSlot>{n.icon}</IconSlot>
                  <RowLabel>{n.label}</RowLabel>
                </Row>
              ))}
            </TreeList>
            <VScroll><ArrowUp /><VThumb /><ArrowDown /></VScroll>
          </TreeBox>
          <PropBox>
            <PropHead>
              <PropHeadCell $first>属性</PropHeadCell>
              <PropHeadCell>值</PropHeadCell>
            </PropHead>
            <PropGroup>基本信息</PropGroup>
            <PropRow>
              <PropGuide />
              <span />
              <PropCell $divider>标签</PropCell>
              <PropCell>计算云图</PropCell>
            </PropRow>
            <HScroll><ArrowLeft /><HThumb /><ArrowRight /></HScroll>
          </PropBox>
          <BottomTabs>
            <BottomTab>视图</BottomTab>
            <BottomTab $active>数据</BottomTab>
          </BottomTabs>
        </LeftColumn>

        <RightColumn>
          <Toolbar>
            <ToolItem><TbCamera /></ToolItem>
            <ToolItem $ml={8}><TbPrint /></ToolItem>
            <ToolSep $ml={5} />
            <ToolItem $ml={4}><TbLine /></ToolItem>
            <ToolItem $w={8}><Chev /></ToolItem>
            <ToolItem $ml={10}><TbHex /></ToolItem>
            <ToolItem $w={8}><Chev /></ToolItem>
            <ToolSep $ml={8} />
            <ToolItem $ml={5}><TbZoom /></ToolItem>
            <ToolItem $ml={8}><TbMove /></ToolItem>
            <ToolItem $ml={8}><TbFit /></ToolItem>
            <ToolItem $ml={7}><TbAxes /></ToolItem>
            <ToolItem $w={8}><Chev /></ToolItem>
            <ToolSep $ml={8} />
            <ToolItem $ml={5}><TbEye /></ToolItem>
            <ToolItem $ml={8}><TbSection /></ToolItem>
            <ToolSep $ml={5} />
            <ToolItem $ml={5}><TbLight /></ToolItem>
            <ToolItem $ml={8}><TbLight dark /></ToolItem>
          </Toolbar>
          <Viewport>
            <Tooltip>设置为顶视图</Tooltip>
            <ModelDrawing width="297" height="146" viewBox="0 0 297 146">
              <rect x=".5" y=".5" width="144" height="144" fill="#d5d5d5" stroke="#1a1a1a" />
              <rect x="144.500" y="102.500" width="151" height="42" fill="#d5d5d5" stroke="#1a1a1a" />
            </ModelDrawing>
            <Triad width="50" height="40" viewBox="0 0 50 40" fontFamily="Liberation Sans" fontSize="9">
              <path d="M15 32V10" stroke="#1fc31f" strokeWidth="2" />
              <path d="M15 8l-3 6h6z" fill="#1fc31f" />
              <path d="M15 32h24" stroke="#f01515" strokeWidth="2" />
              <path d="M36 32l-5-3v6z" fill="#f01515" />
              <circle cx="15" cy="32" r="2.500" fill="#1414d8" />
              <text x="18.500" y="8" fill="#1fc31f">Y</text>
              <text x="18" y="30" fill="#1414d8">Z</text>
              <text x="41" y="31" fill="#f01515">X</text>
            </Triad>
            <ViewTab><Logo /><ViewTabText>对接板热对流热分析-三维</ViewTabText></ViewTab>
          </Viewport>
        </RightColumn>
      </Main>

      <StatusBar>
        <StatusValue $ml={0}>1</StatusValue>
        <StatusValue $ml={25}>03</StatusValue>
        <StatusValue $ml={62}>4.3</StatusValue>
        <StatusValue $ml={23}>03</StatusValue>
      </StatusBar>
    </Page>
  );
}
